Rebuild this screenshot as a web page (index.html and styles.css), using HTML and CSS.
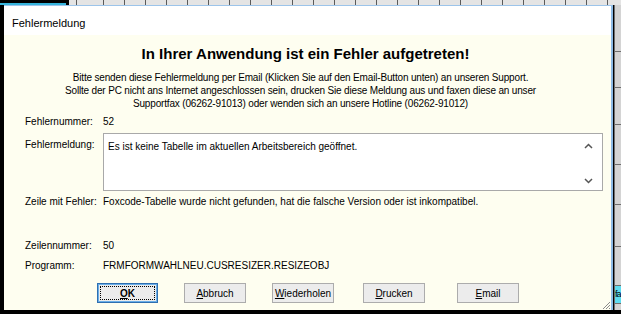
FILE: index.html
```html
<!DOCTYPE html>
<html>
    <head>
        <title>Fehlermeldung</title>
        <link rel="stylesheet" href="styles.css">
    </head>
    <body>
        <div class="screen">
            <div class="top-strip">
                <div class="top-cyan"></div>
                <div class="top-cells"></div>
            </div>
            <div class="middle">
                <div class="left-edge"></div>
                <div class="dialog">
                    <div class="titlebar">Fehlermeldung</div>
                    <div class="content">
                        <h1>In Ihrer Anwendung ist ein Fehler aufgetreten!</h1>
                        <p class="intro">
                            Bitte senden diese Fehlermeldung per Email (Klicken Sie auf den Email-Button unten) an unseren Support.<br>
                            Sollte der PC nicht ans Internet angeschlossen sein, drucken Sie diese Meldung aus und faxen diese an unser<br>
                            Supportfax (06262-91013) oder wenden sich an unsere Hotline (06262-91012)
                        </p>

                        <div class="field f-nummer">
                            <span class="label">Fehlernummer:</span>
                            <span class="value">52</span>
                        </div>
                        <div class="field f-meldung">
                            <span class="label">Fehlermeldung:</span>
                            <div class="memo">
                                <div class="memo-text">Es ist keine Tabelle im aktuellen Arbeitsbereich geöffnet.</div>
                                <div class="memo-scroll">
                                    <svg width="9" height="6" viewBox="0 0 9 6"><path d="M1 5 L4.5 1.5 L8 5" fill="none" stroke="#555" stroke-width="1.5"/></svg>
                                    <svg width="9" height="6" viewBox="0 0 9 6"><path d="M1 1 L4.5 4.5 L8 1" fill="none" stroke="#555" stroke-width="1.5"/></svg>
                                </div>
                            </div>
                        </div>
                        <div class="field f-zeile">
                            <span class="label">Zeile mit Fehler:</span>
                            <span class="value">Foxcode-Tabelle wurde nicht gefunden, hat die falsche Version oder ist inkompatibel.</span>
                        </div>
                        <div class="field f-zeilennr">
                            <span class="label">Zeilennummer:</span>
                            <span class="value">50</span>
                        </div>
                        <div class="field f-programm">
                            <span class="label">Programm:</span>
                            <span class="value">FRMFORMWAHLNEU.CUSRESIZER.RESIZEOBJ</span>
                        </div>

                        <div class="buttons">
                            <button class="btn btn-default"><u>O</u>K</button>
                            <button class="btn"><u>A</u>bbruch</button>
                            <button class="btn"><u>W</u>iederholen</button>
                            <button class="btn btn-drucken"><u>D</u>rucken</button>
                            <button class="btn btn-email"><u>E</u>mail</button>
                        </div>

                        <svg class="grip" width="9" height="9" viewBox="0 0 9 9">
                            <path d="M8 1 L1 8 M8 4 L4 8 M8 7 L7 8" stroke="#8a8a8a" stroke-width="1"/>
                        </svg>
                    </div>
                </div>
                <div class="sheet">
                    <div class="cell" style="height: 47px"></div>
                    <div class="cell" style="height: 36px"></div>
                    <div class="cell" style="height: 37px"></div>
                    <div class="cell" style="height: 40px"></div>
                    <div class="cell" style="height: 40px"></div>
                    <div class="cell" style="height: 42px"></div>
                    <div class="cell" style="height: 39px"></div>
                    <div class="cell cell-cyan">fa</div>
                    <div class="cell cell-rest"></div>
                </div>
            </div>
            <div class="bottom-strip"></div>
        </div>
    </body>
</html>
```

FILE: styles.css
```css
html, body {
    margin: 0;
    padding: 0;
    background: #000;
}
.screen {
    width: 621px;
    height: 314px;
    overflow: hidden;
    font-family: "Liberation Sans", Arial, sans-serif;
    font-size: 10px;
    color: #000;
}

/* spreadsheet peeking out behind the dialog */
.top-strip {
    height: 5px;
    display: flex;
}
.top-cyan {
    width: 66px;
    height: 2px;
    margin-top: 3px;
    background: #36b4dc;
}
.top-cells {
    flex: 1;
    margin-left: 3px;
    background: repeating-linear-gradient(90deg, #e4e4e4 0 20px, #5a5a5a 20px 21px);
    background-position: 14px 0;
}
.middle {
    display: flex;
    height: 305px;
}
.left-edge {
    width: 4px;
}
.sheet {
    width: 7px;
    margin-left: 1px;
    box-sizing: border-box;
    display: flex;
    flex-direction: column;
    background: #d4d4d4;
    border-left: 1px solid #6e6e6e;
}
.cell {
    border-bottom: 1px solid #6e6e6e;
    box-sizing: border-box;
}
.cell-cyan {
    height: 18px;
    background: #5fdcef;
    font-size: 9px;
    letter-spacing: -1px;
    line-height: 17px;
    overflow: hidden;
    white-space: nowrap;
}
.cell-rest {
    flex: 1;
    border-bottom: none;
}

/* dialog window */
.dialog {
    width: 609px;
    box-sizing: border-box;
    border-top: 1px solid #9cc4ea;
    border-right: 2px solid #8dbbe6;
    display: flex;
    flex-direction: column;
    background: #fefef0;
}
.titlebar {
    height: 29px;
    box-sizing: border-box;
    padding: 11px 0 0 8px;
    background: #fff;
    font-size: 11px;
    line-height: 13px;
}
.content {
    position: relative;
    flex: 1;
    padding: 10px 0 0 21px;
}
h1 {
    margin: 0 0 8px -21px;
    padding-right: 4px;
    font-size: 15px;
    line-height: 18px;
    text-align: center;
}
.intro {
    margin: 0 0 5px -21px;
    padding-right: 14px;
    line-height: 13px;
    letter-spacing: -0.17px;
    text-align: center;
}
.field {
    display: flex;
    line-height: 13px;
}
.label {
    width: 78px;
    flex-shrink: 0;
}
.f-meldung {
    margin-top: 5px;
}
.f-meldung .label {
    padding-top: 5px;
}
.memo {
    width: 500px;
    height: 58px;
    box-sizing: border-box;
    border: 1px solid #a9a9a9;
    background: #fff;
    display: flex;
}
.memo-text {
    flex: 1;
    padding: 6px 0 0 4px;
}
.memo-scroll {
    width: 18px;
    display: flex;
    flex-direction: column;
    justify-content: space-between;
    padding: 9px 0 6px;
}
.f-zeile {
    margin-top: 4px;
}
.f-zeilennr {
    margin-top: 31px;
}
.f-programm {
    margin-top: 7px;
}
.buttons {
    display: flex;
    gap: 26px;
    margin-top: 11px;
    padding-left: 72px;
}
.btn {
    width: 62px;
    height: 20px;
    padding: 0;
    box-sizing: border-box;
    border: 1px solid #acacac;
    background: #ececec;
    font-family: "Liberation Sans", Arial, sans-serif;
    font-size: 10px;
    color: #000;
}
.btn-default {
    width: 61px;
    font-weight: bold;
    border-color: #2f6fb0;
    box-shadow: inset 0 0 0 1px #6aaee8;
    outline: 1px dotted #000;
    outline-offset: -4px;
}
.btn-drucken {
    margin-left: 3px;
}
.btn-email {
    margin-left: 6px;
}
.grip {
    position: absolute;
    right: 0;
    bottom: 0;
}
.bottom-strip {
    height: 4px;
}
```
